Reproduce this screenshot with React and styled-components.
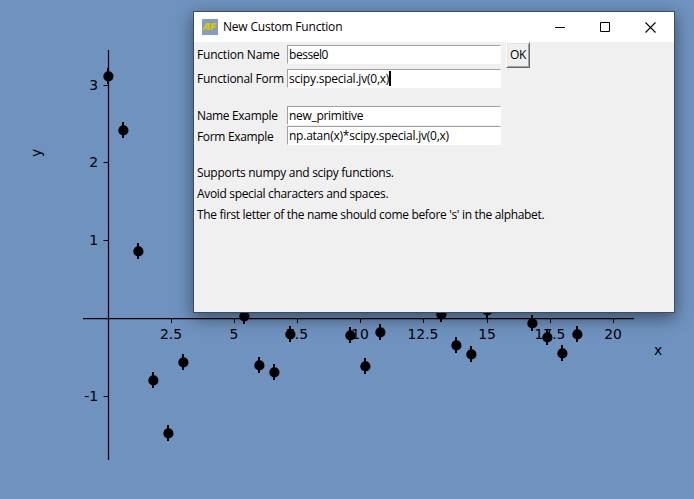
import React from 'react';
import styled, { createGlobalStyle } from 'styled-components';

const Global = createGlobalStyle`
  body { margin: 0; background: #6f92bf; overflow: hidden; }
`;

const Screen = styled.div`
  position: relative;
  width: 694px;
  height: 499px;
  overflow: hidden;
  background: #6f92bf;
`;

const Plot = styled.svg`
  display: block;
  font: 13.9px "DejaVu Sans", sans-serif;
`;

const Dialog = styled.section`
  position: absolute;
  left: 193px;
  top: 11px;
  box-sizing: border-box;
  width: 482px;
  height: 302px;
  border: 1px solid #3c4c61;
  background: #f0f0f0;
  color: #000;
  font: 12px/20px "Open Sans", "Noto Sans", sans-serif;
  box-shadow: 0 5px 16px rgba(0, 0, 0, 0.48);
`;

const TitleBar = styled.header`
  display: flex;
  align-items: center;
  height: 30px;
  padding-left: 8px;
  background: #fff;
`;

const Title = styled.h1`
  flex: 1;
  margin: 0 0 0 5px;
  font-size: 12px;
  font-weight: 400;
  line-height: 30px;
`;

const WindowButton = styled.button`
  display: flex;
  align-items: center;
  justify-content: center;
  width: ${(p) => p.$width || 45}px;
  height: 30px;
  padding: 0;
  border: 0;
  background: transparent;
`;

const Form = styled.form`
  display: flex;
  flex-direction: column;
  padding-left: 3px;
`;

const Row = styled.div`
  display: grid;
  grid-template-columns: 90px 214px 24px;
  align-items: center;
  height: ${(p) => p.$height}px;
  margin-top: ${(p) => p.$gap || 0}px;
`;

const Fit = styled.span`
  display: inline-block;
  white-space: nowrap;
  letter-spacing: ${(p) => p.$spacing || 0}px;
`;

const Label = styled.label`
  white-space: nowrap;
`;

const Entry = styled.div`
  box-sizing: border-box;
  display: flex;
  align-items: center;
  align-self: start;
  height: 19px;
  margin-top: ${(p) => p.$top}px;
  padding-left: 1px;
  border: 1px solid #fff;
  border-top-color: #a0a0a0;
  border-left-color: #a0a0a0;
  background: #fff;
  line-height: 17px;
`;

const Caret = styled.span`
  width: 2px;
  height: 15px;
  background: #000;
`;

const OkButton = styled.button`
  box-sizing: border-box;
  width: 24px;
  height: 26px;
  margin-left: 5px;
  padding: 0;
  border: 1px solid #fff;
  border-right-color: #696969;
  border-bottom-color: #696969;
  box-shadow: inset 1px 1px #e3e3e3, inset -1px -1px #a0a0a0;
  background: #f0f0f0;
  color: #000;
  font: 12px/24px "Open Sans", sans-serif;
  letter-spacing: -0.4px;
`;

const Notes = styled.div`
  display: flex;
  flex-direction: column;
  margin-top: 15px;
  line-height: 21px;
`;

const xTicks = [[171, '2.5'], [234, '5'], [297, '7.5'], [360, '10'], [423, '12.5'], [487, '15'], [550, '17.5'], [613, '20']];
const yTicks = [[85, '3'], [162, '2'], [240, '1'], [396, '-1']];
const points = [
  [108, 76], [123, 130], [138, 251], [153, 380], [168, 433], [183, 362],
  [244, 316], [259, 365], [274, 372], [290, 334], [350, 335], [365, 366],
  [380, 332], [441, 314], [456, 345], [471, 354], [487, 310], [532, 323],
  [547, 337], [562, 353], [577, 334],
];

function Chart() {
  return (
    <Plot width="694" height="499">
      <path d="M108.5 50V460M83 318.5H634" stroke="#000" strokeWidth="1.25" />
      {xTicks.map(([x, t]) => (
        <g key={t}>
          <path d={`M${x + 0.5} 318v5`} stroke="#000" />
          <text x={x} y="339" textAnchor="middle">{t}</text>
        </g>
      ))}
      {yTicks.map(([y, t]) => (
        <g key={t}>
          <path d={`M103.5 ${y + 0.5}h5`} stroke="#000" />
          <text x="98" y={y + 5} textAnchor="end">{t}</text>
        </g>
      ))}
      {points.map(([x, y]) => (
        <g key={x}>
          <path d={`M${x} ${y - 8}v16`} stroke="#000" strokeWidth="2" />
          <circle cx={x + 0.4} cy={y + 0.4} r="5.1" />
        </g>
      ))}
      <text x="658" y="355" textAnchor="middle">x</text>
      <text transform="translate(41 153) rotate(-90)" textAnchor="middle">y</text>
    </Plot>
  );
}

function AppIcon() {
  return (
    <svg width="16" height="16" viewBox="0 0 16 16">
      <path fill="#7f9fc5" d="M0 0h16v16H0z" />
      <path
        fill="none"
        stroke="#e6c200"
        strokeWidth="2"
        d="M1.5 11 5 5h2L6.3 11M3 8.6h4M9.3 11l1-6h4M9.8 8h3.7"
      />
    </svg>
  );
}

const notes = [
  ['Supports numpy and scipy functions.', -0.29],
  ['Avoid special characters and spaces.', -0.33],
  ["The first letter of the name should come before 's' in the alphabet.", -0.33],
];

function Field({ label, labelSpacing, value, spacing, height, top, gap, caret, children }) {
  return (
    <Row $height={height} $gap={gap}>
      <Label><Fit $spacing={labelSpacing}>{label}</Fit></Label>
      <Entry $top={top}><Fit $spacing={spacing}>{value}</Fit>{caret && <Caret />}</Entry>
      {children}
    </Row>
  );
}

export default function App() {
  return (
    <>
      <Global />
      <Screen>
        <Chart />
        <Dialog>
          <TitleBar>
            <AppIcon />
            <Title><Fit $spacing={-0.2}>New Custom Function</Fit></Title>
            <WindowButton aria-label="Minimize">
              <svg width="10" height="11"><path d="M0 5.5h10" stroke="#000" /></svg>
            </WindowButton>
            <WindowButton aria-label="Maximize">
              <svg width="10" height="10"><path d="M.5.5h9v9h-9z" fill="none" stroke="#000" /></svg>
            </WindowButton>
            <WindowButton aria-label="Close" $width={47}>
              <svg width="11" height="11"><path d="m.5.5 10 10m0-10-10 10" stroke="#000" strokeWidth="1.1" /></svg>
            </WindowButton>
          </TitleBar>
          <Form>
            <Field label="Function Name" labelSpacing={-0.2} value="bessel0" spacing={-0.45} height={26} top={3}>
              <OkButton type="button">OK</OkButton>
            </Field>
            <Field label="Functional Form" labelSpacing={-0.26} value="scipy.special.jv(0,x)" spacing={-0.22} height={21} top={1} caret />
            <Field label="Name Example" labelSpacing={-0.33} value="new_primitive" spacing={-0.3} height={21} top={1} gap={16} />
            <Field label="Form Example" labelSpacing={-0.33} value="np.atan(x)*scipy.special.jv(0,x)" spacing={-0.24} height={21} top={0} />
            <Notes>
              {notes.map(([text, spacing]) => (
                <Fit key={text} $spacing={spacing}>{text}</Fit>
              ))}
            </Notes>
          </Form>
        </Dialog>
      </Screen>
    </>
  );
}
